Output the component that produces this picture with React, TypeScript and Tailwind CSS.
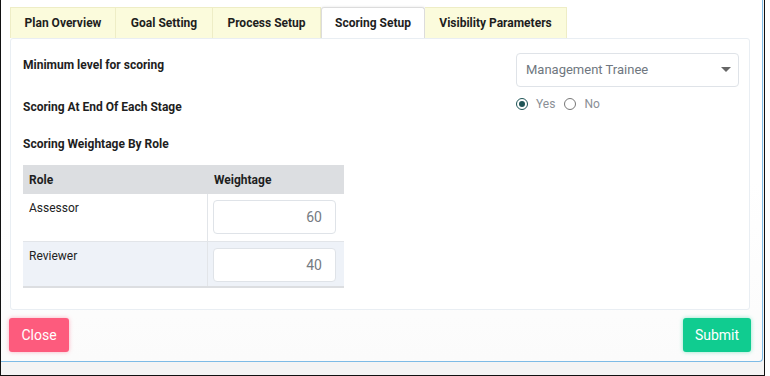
import React from "react";

const tabs = ["Plan Overview", "Goal Setting", "Process Setup", "Scoring Setup", "Visibility Parameters"];
const tabWidths = ["w-[106px]", "w-[97px]", "w-[108px]", "w-[104px]", "w-[142px]"];

export default function App() {
  return (
    <div className="w-[770px] h-[376px] bg-white" style={{ fontFamily: "Roboto, 'Liberation Sans', sans-serif" }}>
      <div className="w-[765px] h-[376px] border-l border-r border-b border-[#111] bg-[#f4f4f4]">
        <div className="w-[762px] h-[362px] border-r border-b border-[#7dbbe6] rounded-br-[4px] bg-gradient-to-b from-white via-white to-[#fbfbfb] flex flex-col">
          {/* tabs */}
          <div className="flex pl-[9px] pt-[7px] h-[38px]">
            {tabs.map((t, i) => {
              const active = i === 3;
              return (
                <div
                  key={t}
                  className={
                    tabWidths[i] +
                    " h-[31px] flex items-center justify-center text-[12px] font-bold text-[#1e1e1e] border-t border-r " +
                    (i === 0 ? "border-l " : "") +
                    (active
                      ? "bg-white border-[#dcdcdc] rounded-t-[3px] border-l shadow-[0_-1px_2px_rgba(0,0,0,0.05)]"
                      : "bg-[#fbfbdc] border-[#eeedc6]")
                  }
                >
                  {t}
                </div>
              );
            })}
          </div>
          {/* card */}
          <div className="ml-[9px] w-[740px] h-[272px] border border-[#e9eef3] rounded-[3px] bg-white pl-[12px] pr-[10px] pt-[14px]">
            <div className="flex justify-between h-[34px]">
              <div className="mt-[4px] text-[12px] leading-[16px] font-bold text-[#1e1e1e]">Minimum level for scoring</div>
              <div className="w-[223px] h-[34px] border border-[#dfe3e8] rounded-[4px] flex items-center justify-between pl-[9px] pr-[7px]">
                <span className="text-[13px] text-[#6f7780]">Management Trainee</span>
                <svg width="10" height="6" viewBox="0 0 10 6"><path d="M0 0h10L5 5z" fill="#666" /></svg>
              </div>
            </div>
            <div className="flex justify-between mt-[11px] h-[17px]">
              <div className="mt-[1px] text-[12px] leading-[16px] font-bold text-[#1e1e1e]">Scoring At End Of Each Stage</div>
              <div className="w-[223px] flex items-center h-[14px] -mt-[1px] text-[12px] text-[#8a8f96]">
                <span className="w-[12px] h-[12px] rounded-full border border-[#1e5456] flex items-center justify-center">
                  <span className="w-[6px] h-[6px] rounded-full bg-[#1e5456]" />
                </span>
                <span className="ml-[8px]">Yes</span>
                <span className="ml-[9px] w-[12px] h-[12px] rounded-full border border-[#777]" />
                <span className="ml-[8px]">No</span>
              </div>
            </div>
            <div className="mt-[21px] text-[12px] leading-[16px] font-bold text-[#1e1e1e]">Scoring Weightage By Role</div>
            <div className="mt-[13px] w-[321px] border-b-2 border-[#dcdee1] text-[12px]">
              <div className="flex h-[29px] bg-[#dcdee1] font-bold text-[#1e1e1e] items-center">
                <div className="w-[185px] pl-[6px]">Role</div>
                <div className="pl-[6px]">Weightage</div>
              </div>
              {[
                ["Assessor", "60", "bg-white", "h-[47px]"],
                ["Reviewer", "40", "bg-[#eef2f8]", "h-[45px]"],
              ].map(([r, v, bg, h], i) => (
                <div key={r} className={"flex " + bg + " " + h + (i === 1 ? " border-t border-[#e2e5e9]" : "")}>
                  <div className="w-[185px] pl-[6px] pt-[5px] border-r border-[#e2e5e9] text-[#222]">{r}</div>
                  <div className="pl-[5px] pt-[6px]">
                    <div className="w-[123px] h-[34px] border border-[#dfe3e8] rounded-[4px] bg-white flex items-center justify-end pr-[13px] text-[14px] text-[#757b82]">
                      {v}
                    </div>
                  </div>
                </div>
              ))}
            </div>
          </div>
          {/* footer */}
          <div className="flex justify-between pl-[8px] pr-[11px] mt-[8px]">
            <button className="w-[60px] h-[34px] rounded-[3px] bg-[#fd5b7d] text-white text-[14px] shadow-[0_0_4px_rgba(253,91,125,0.45)]">Close</button>
            <button className="w-[68px] h-[34px] rounded-[3px] bg-[#10cc90] text-white text-[14px] shadow-[0_0_4px_rgba(16,204,144,0.45)]">Submit</button>
          </div>
        </div>
      </div>
    </div>
  );
}
